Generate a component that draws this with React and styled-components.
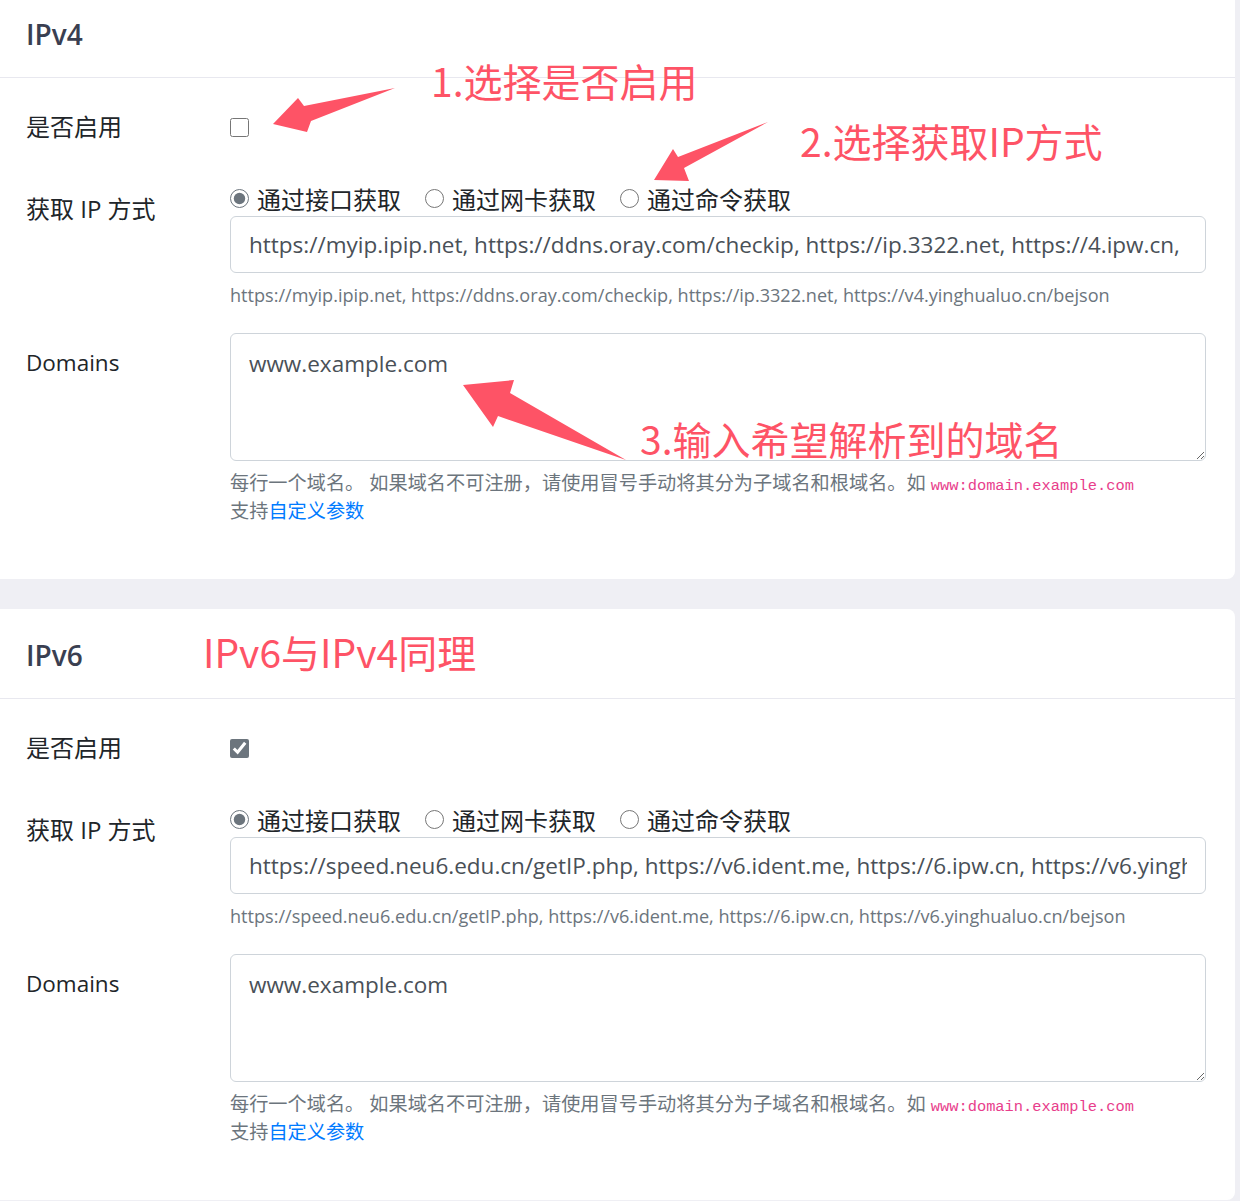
import React from "react";
import styled, { createGlobalStyle } from "styled-components";

const GlobalStyle = createGlobalStyle`
  * {
    box-sizing: border-box;
  }
  body {
    margin: 0;
    background: #efeff4;
    font-family: "Open Sans", "Noto Sans CJK SC", sans-serif;
    color: #212529;
  }
`;

const Page = styled.div`
  position: relative;
  width: 1240px;
  height: 1201px;
  overflow: hidden;
`;

const CardList = styled.div`
  display: flex;
  flex-direction: column;
  gap: 30px;
  margin: -12px 5px 0 -10px;
`;

const Card = styled.section`
  background: #fff;
  border-radius: 8px;
`;

const CardHeader = styled.div`
  display: flex;
  align-items: center;
  height: 90px;
  padding: 3px 36px 0;
  border-bottom: 1px solid #e8e8ef;
`;

const Title = styled.h5`
  margin: 0;
  font-size: 28px;
  font-weight: 600;
  color: #3a3f51;
`;

const CardBody = styled.div`
  padding: 31px 29px 54px 36px;
`;

const FormRow = styled.div`
  display: grid;
  grid-template-columns: 204px 1fr;
  margin-bottom: ${props => props.$gap || 0}px;
`;

const Label = styled.div`
  font-size: ${props => (props.$latin ? 22.5 : 24)}px;
  line-height: 36px;
  padding-top: ${props => props.$offset || 0}px;
`;

const CheckLine = styled.div`
  display: flex;
  align-items: center;
  height: 36px;
`;

const Checkbox = styled.input`
  width: 19px;
  height: 19px;
  margin: 0;
  accent-color: #6c757d;
`;

const RadioGroup = styled.div`
  display: flex;
  align-items: center;
  gap: 24px;
  height: 36px;
`;

const RadioItem = styled.label`
  display: flex;
  align-items: center;
  gap: 8px;
  font-size: 24px;
`;

const Radio = styled.input`
  width: 19px;
  height: 19px;
  margin: 0;
  accent-color: #6c757d;
`;

const UrlInput = styled.input`
  display: block;
  width: 100%;
  height: 57px;
  padding: 0 18px;
  border: 1px solid #ced4da;
  border-radius: 6px;
  font-family: inherit;
  font-size: 22.5px;
  color: #495057;
  outline: none;
`;

const DomainBox = styled.textarea`
  display: block;
  width: 100%;
  height: 128px;
  padding: 12px 18px;
  border: 1px solid #ced4da;
  border-radius: 6px;
  font-family: inherit;
  font-size: 22.5px;
  line-height: 36px;
  color: #495057;
  resize: vertical;
  outline: none;
`;

const Help = styled.div`
  margin-top: ${props => props.$top}px;
  font-size: ${props => (props.$latin ? 18.1 : 19.2)}px;
  line-height: 28px;
  color: #6c757d;
  white-space: nowrap;
`;

const Code = styled.code`
  font-family: "Liberation Mono", monospace;
  font-size: 15.4px;
  line-height: 1;
  color: #e83e8c;
`;

const Link = styled.a`
  color: #007bff;
  text-decoration: none;
`;

const Overlay = styled.div`
  position: absolute;
  inset: 0;
  pointer-events: none;
`;

const Note = styled.div`
  position: absolute;
  left: ${props => props.$x}px;
  top: ${props => props.$y}px;
  font-family: "Noto Sans CJK SC", sans-serif;
  font-size: 39px;
  line-height: 40px;
  color: #fe5366;
  white-space: nowrap;
`;

const Arrows = styled.svg`
  position: absolute;
  left: 0;
  top: 0;
`;

const methods = ["通过接口获取", "通过网卡获取", "通过命令获取"];

const sections = [
  {
    name: "IPv4",
    enabled: false,
    url:
      "https://myip.ipip.net, https://ddns.oray.com/checkip, https://ip.3322.net, https://4.ipw.cn, https://v4.yinghualuo.cn/bejson",
    hint:
      "https://myip.ipip.net, https://ddns.oray.com/checkip, https://ip.3322.net, https://v4.yinghualuo.cn/bejson"
  },
  {
    name: "IPv6",
    enabled: true,
    url:
      "https://speed.neu6.edu.cn/getIP.php, https://v6.ident.me, https://6.ipw.cn, https://v6.yinghualuo.cn/bejson",
    hint:
      "https://speed.neu6.edu.cn/getIP.php, https://v6.ident.me, https://6.ipw.cn, https://v6.yinghualuo.cn/bejson"
  }
];

const IpSection = ({ section }) => (
  <Card>
    <CardHeader>
      <Title>{section.name}</Title>
    </CardHeader>
    <CardBody>
      <FormRow $gap={35}>
        <Label>是否启用</Label>
        <CheckLine>
          <Checkbox type="checkbox" defaultChecked={section.enabled} />
        </CheckLine>
      </FormRow>
      <FormRow $gap={24}>
        <Label $offset={11}>获取 IP 方式</Label>
        <div>
          <RadioGroup>
            {methods.map((m, i) => (
              <RadioItem key={m}>
                <Radio
                  type="radio"
                  name={section.name + "-method"}
                  defaultChecked={i === 0}
                />
                {m}
              </RadioItem>
            ))}
          </RadioGroup>
          <UrlInput readOnly value={section.url} />
          <Help $top={8} $latin>
            {section.hint}
          </Help>
        </div>
      </FormRow>
      <FormRow>
        <Label $offset={12} $latin>
          Domains
        </Label>
        <div>
          <DomainBox defaultValue="www.example.com" />
          <Help $top={8}>
            每行一个域名。 如果域名不可注册，请使用冒号手动将其分为子域名和根域名。如{" "}
            <Code>www:domain.example.com</Code>
            <br />
            支持<Link href="#">自定义参数</Link>
          </Help>
        </div>
      </FormRow>
    </CardBody>
  </Card>
);

export default function App() {
  return (
    <Page>
      <GlobalStyle />
      <CardList>
        {sections.map(s => (
          <IpSection key={s.name} section={s} />
        ))}
      </CardList>
      <Overlay>
        <Arrows width="1240" height="1201" viewBox="0 0 1240 1201">
          <polygon
            fill="#fe5366"
            points="273,124 298,98 304,106 395,88 311,121 307,132"
          />
          <polygon
            fill="#fe5366"
            points="654,180 673,149 678,157 768,122 684,168 689,181"
          />
          <polygon
            fill="#fe5366"
            points="463,385 514,380 510,393 626,460 498,416 493,427"
          />
        </Arrows>
        <Note $x={431} $y={60}>1.选择是否启用</Note>
        <Note $x={800} $y={120}>2.选择获取IP方式</Note>
        <Note $x={640} $y={418}>3.输入希望解析到的域名</Note>
        <Note $x={203} $y={631}>IPv6与IPv4同理</Note>
      </Overlay>
    </Page>
  );
}
